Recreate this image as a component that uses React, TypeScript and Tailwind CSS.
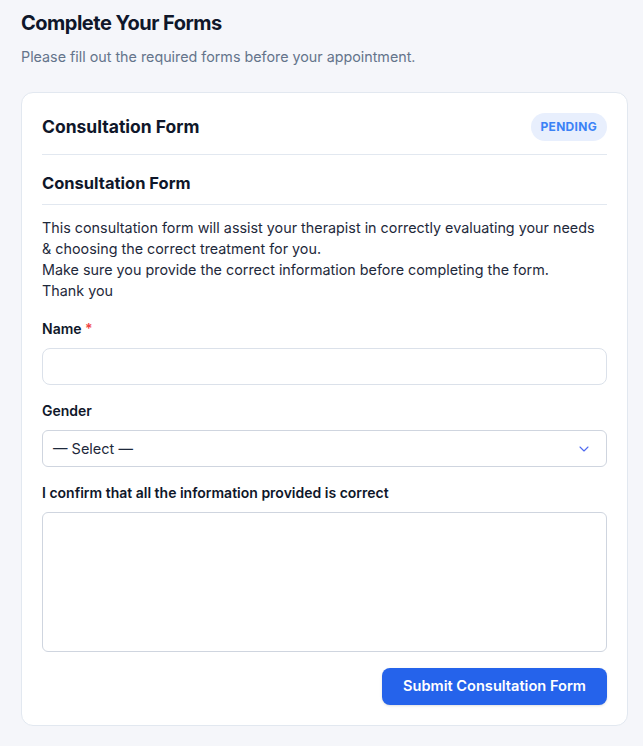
import { ChevronDown } from "lucide-react";

export default function App() {
  return (
    <div className="min-h-[746px] bg-[#f5f6fa] pb-[21px] pl-[21px] pr-[15px] pt-[9px] font-['Inter',sans-serif]">
      <h1 className="text-[20px] font-bold leading-[28px] tracking-tight text-[#0f172a]">
        Complete Your Forms
      </h1>
      <p className="mt-[10px] text-[14.3px] leading-[20px] text-[#64748b]">
        Please fill out the required forms before your appointment.
      </p>

      <div className="mt-[25px] rounded-xl border border-[#e2e8f0] bg-white px-5 pb-5 pt-5">
        <div className="flex items-center justify-between border-b border-[#e2e8f0] pb-[13px]">
          <h2 className="text-[17.5px] font-bold leading-[26px] text-[#0f172a]">
            Consultation Form
          </h2>
          <span className="rounded-full bg-[#e8effd] px-[10px] py-[5px] text-[12px] font-bold tracking-wide text-[#3b82f6]">
            PENDING
          </span>
        </div>

        <h3 className="border-b border-[#e2e8f0] pb-[9px] pt-[16px] text-[16.5px] font-bold leading-[24px] text-[#0f172a]">
          Consultation Form
        </h3>

        <p className="mt-[12px] text-[14.35px] leading-[21px] text-[#1e293b]">
          This consultation form will assist your therapist in correctly
          evaluating your needs
          <br />& choosing the correct treatment for you.
          <br />
          Make sure you provide the correct information before completing the
          form.
          <br />
          Thank you
        </p>

        <label className="mt-[18px] block text-[14px] font-semibold leading-[20px] text-[#0f172a]">
          Name <span className="text-[#ef4444]">*</span>
        </label>
        <input
          type="text"
          className="mt-[9px] block h-[37px] w-full rounded-lg border border-[#dbe1ea] px-3 text-[14px]"
        />

        <label className="mt-[16px] block text-[14px] font-semibold leading-[20px] text-[#0f172a]">
          Gender
        </label>
        <div className="mt-[9px] flex h-[37px] w-full items-center justify-between rounded-md border border-[#cfd5df] pl-[10px] pr-[14px]">
          <span className="text-[14.5px] text-[#1e293b]">— Select —</span>
          <ChevronDown className="h-4 w-4 text-[#4f6af0]" strokeWidth={1.6} />
        </div>

        <label className="mt-[16px] block text-[14px] font-semibold leading-[20px] text-[#0f172a]">
          I confirm that all the information provided is correct
        </label>
        <textarea className="mt-[9px] block h-[140px] w-full resize-none rounded-md border border-[#cfd5df]" />

        <div className="mt-[16px] flex justify-end">
          <button className="h-[37px] rounded-lg bg-[#2563eb] px-[21px] text-[14.6px] font-semibold text-white shadow-sm">
            Submit Consultation Form
          </button>
        </div>
      </div>
    </div>
  );
}
